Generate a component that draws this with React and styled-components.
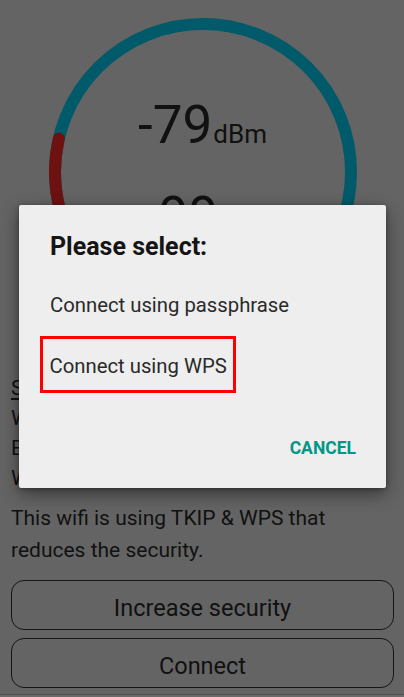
import React from 'react'
import styled, { createGlobalStyle } from 'styled-components'

const GlobalStyle = createGlobalStyle`
  html, body {
    margin: 0;
    padding: 0;
    background: #646464;
  }
  * {
    box-sizing: border-box;
  }
`

const Screen = styled.div`
  position: relative;
  width: 404px;
  height: 697px;
  overflow: hidden;
  background: #646464;
  font-family: Roboto, 'Noto Sans', sans-serif;
  color: #111;
  display: flex;
  flex-direction: column;
  padding: 0 10px 0 11px;
`

const Gauge = styled.div`
  align-self: center;
  margin-top: 18px;
  width: 308px;
  height: 308px;
  flex-shrink: 0;
  display: grid;
  > * {
    grid-area: 1 / 1;
  }
`

const Readout = styled.div`
  display: flex;
  flex-direction: column;
  align-items: center;
  padding-top: 77px;
`

const Value = styled.div`
  font-size: 53px;
  line-height: 60px;
  margin-top: ${(p) => p.gap || 0}px;
  margin-left: ${(p) => p.shift || 0}px;
  white-space: nowrap;
`

const Unit = styled.span`
  font-size: 26px;
  margin-left: 1px;
`

const InfoList = styled.div`
  margin-top: 47px;
  font-size: 21px;
  line-height: 30px;
`

const InfoLine = styled.div`
  text-decoration: ${(p) => (p.underline ? 'underline' : 'none')};
  text-underline-offset: 3px;
  white-space: nowrap;
`

const Warning = styled.p`
  margin: 9px 0 0;
  font-size: 21px;
  line-height: 32px;
`

const Actions = styled.div`
  margin-top: 14px;
  display: flex;
  flex-direction: column;
  gap: 8px;
`

const OutlineButton = styled.button`
  height: 50px;
  border: 1.5px solid #151515;
  border-radius: 13px;
  background: transparent;
  font-family: inherit;
  font-size: 23.5px;
  color: #111;
  padding: 6px 0 0;
  display: flex;
  align-items: center;
  justify-content: center;
`

const NavEdge = styled.div`
  margin: auto -10px 0 -11px;
  height: 3px;
  border-top: 1px solid #4e4e4e;
  background: #6a6a6a;
`

const Scrim = styled.div`
  position: absolute;
  inset: 0;
`

const Dialog = styled.div`
  position: absolute;
  left: 19px;
  top: 205px;
  width: 367px;
  height: 283px;
  background: #eeeeee;
  border-radius: 2px;
  box-shadow: 0 6px 18px rgba(0, 0, 0, 0.45), 0 1px 4px rgba(0, 0, 0, 0.3);
  display: flex;
  flex-direction: column;
  padding: 28px 30px 0 31px;
  font-family: Roboto, sans-serif;
`

const Title = styled.div`
  font-size: 25px;
  line-height: 28px;
  font-weight: 700;
  color: #151515;
`

const Option = styled.div`
  font-size: 20.3px;
  line-height: 24px;
  color: #2a2a2a;
  margin-top: ${(p) => p.gap || 0}px;
`

const Highlight = styled.div`
  align-self: flex-start;
  margin: 18.7px 0 0 -10px;
  border: 3.5px solid #ff0000;
  padding: 15.5px 6px 12px 6.5px;
`

const Footer = styled.div`
  margin-top: 45px;
  display: flex;
  justify-content: flex-end;
`

const TextButton = styled.button`
  border: none;
  background: none;
  padding: 0;
  font-family: Roboto, sans-serif;
  font-size: 17.5px;
  line-height: 20px;
  font-weight: 700;
  color: #009688;
`

const Ring = () => (
  <svg width="308" height="308" viewBox="0 0 308 308">
    <circle cx="154" cy="154" r="148" fill="none" stroke="#005a69" strokeWidth="12" />
    <path
      d="M 9.8 120.7 A 148 148 0 0 0 40.6 249.1"
      fill="none"
      stroke="#6d1111"
      strokeWidth="12"
      strokeLinecap="round"
    />
  </svg>
)

export default function App() {
  return (
    <>
      <GlobalStyle />
      <Screen>
        <Gauge>
          <Ring />
          <Readout>
            <Value>
              -79<Unit>dBm</Unit>
            </Value>
            <Value gap={22} shift={-8}>
              99<Unit>%</Unit>
            </Value>
          </Readout>
        </Gauge>

        <InfoList>
          <InfoLine underline>Security</InfoLine>
          <InfoLine>WPA2-PSK</InfoLine>
          <InfoLine>Encryption: TKIP</InfoLine>
          <InfoLine>WPS</InfoLine>
        </InfoList>

        <Warning>
          This wifi is using TKIP &amp; WPS that
          <br />
          reduces the security.
        </Warning>

        <Actions>
          <OutlineButton>Increase security</OutlineButton>
          <OutlineButton>Connect</OutlineButton>
        </Actions>

        <NavEdge />

        <Scrim />
        <Dialog>
          <Title>Please select:</Title>
          <Option gap={32}>Connect using passphrase</Option>
          <Highlight>
            <Option>Connect using WPS</Option>
          </Highlight>
          <Footer>
            <TextButton>CANCEL</TextButton>
          </Footer>
        </Dialog>
      </Screen>
    </>
  )
}
